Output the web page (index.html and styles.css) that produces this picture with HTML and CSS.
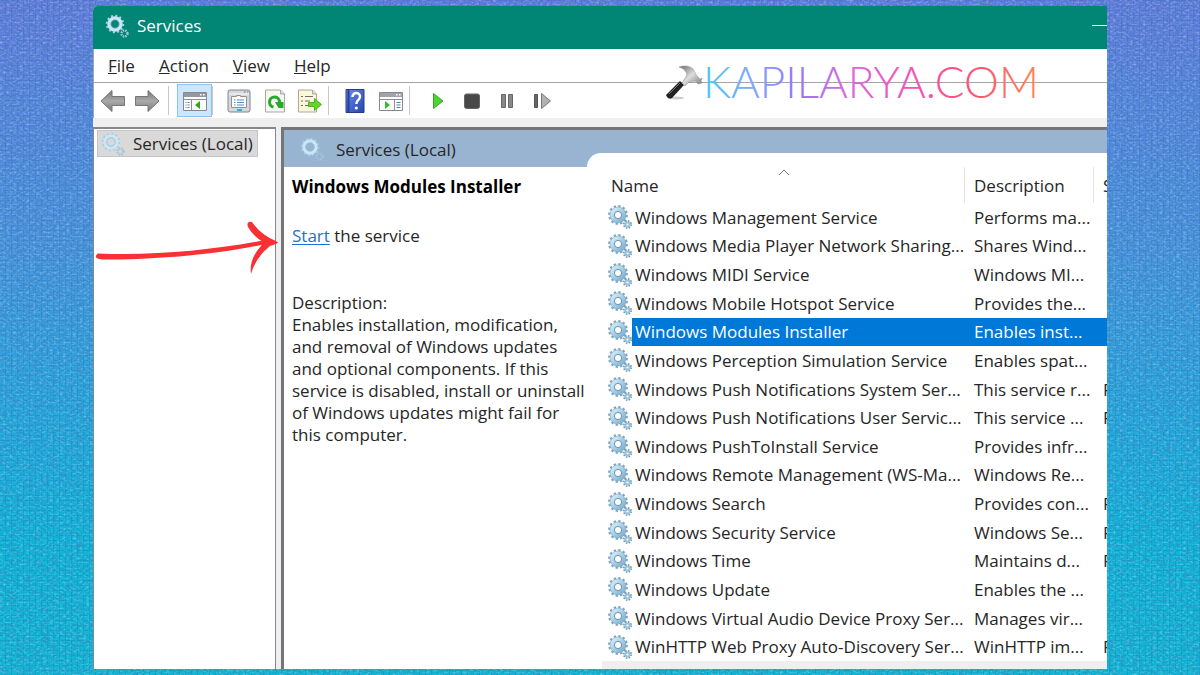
FILE: index.html
```html
<!DOCTYPE html>
<html lang="en">
<head>
<meta charset="utf-8">
<title>Services</title>
<link rel="stylesheet" href="styles.css">
</head>
<body>
<svg class="fabric" aria-hidden="true">
  <filter id="weave" x="0" y="0" width="100%" height="100%">
    <feTurbulence type="fractalNoise" baseFrequency="0.12 0.34" numOctaves="3" seed="8"/>
    <feColorMatrix values="0 0 0 0 0.05  0 0 0 0 0.2  0 0 0 0 0.5  1.8 0 0 0 -0.75"/>
  </filter>
  <filter id="glint" x="0" y="0" width="100%" height="100%">
    <feTurbulence type="fractalNoise" baseFrequency="0.3 0.5" numOctaves="2" seed="21"/>
    <feColorMatrix values="0 0 0 0 0.6  0 0 0 0 0.85  0 0 0 0 1  1.6 0 0 0 -0.75"/>
  </filter>
  <pattern id="threads" width="6" height="5" patternUnits="userSpaceOnUse"><path d="M0 .5h4M5.500 0v5" stroke="#123f8c" stroke-opacity=".3"/></pattern>
  <rect width="100%" height="100%" fill="url(#threads)"/>
  <rect width="100%" height="100%" filter="url(#weave)"/>
  <rect width="100%" height="100%" filter="url(#glint)"/>
</svg>
<svg class="defs" aria-hidden="true">
  <defs>
    <linearGradient id="steel" x1="0" y1="0" x2="1" y2="1"><stop offset="0" stop-color="#d3ecf8"/><stop offset="1" stop-color="#7fb0cf"/></linearGradient>
    <linearGradient id="gray" x1="0" y1="0" x2="0" y2="1"><stop offset="0" stop-color="#777"/><stop offset=".5" stop-color="#aaa"/><stop offset="1" stop-color="#777"/></linearGradient>
    <linearGradient id="blue" x1="0" y1="0" x2="1" y2="1"><stop offset="0" stop-color="#6d8bea"/><stop offset="1" stop-color="#2545ad"/></linearGradient>
    <linearGradient id="metal" x1="0" y1="0" x2="1" y2="1"><stop offset="0" stop-color="#666"/><stop offset=".5" stop-color="#ddd"/><stop offset="1" stop-color="#777"/></linearGradient>
    <symbol id="gears" viewBox="0 0 24 24">
      <circle cx="10" cy="10" r="8.6" fill="none" stroke="#7ba5c0" stroke-width="2.6" stroke-dasharray="2.3 2.2"/>
      <circle cx="10" cy="10" r="5.8" fill="none" stroke="url(#steel)" stroke-width="4.6"/>
      <circle cx="10" cy="10" r="3.6" fill="none" stroke="#6795b5" stroke-width="1"/>
      <circle cx="10" cy="10" r="8" fill="none" stroke="#7faac5" stroke-width=".6"/>
      <circle cx="19.5" cy="19.5" r="3.6" fill="none" stroke="#6f97b2" stroke-width="1.8" stroke-dasharray="1.5 1.33"/>
      <circle cx="19.5" cy="19.5" r="2.1" fill="none" stroke="#98c1da" stroke-width="2"/>
    </symbol>
    <symbol id="gears-light" viewBox="0 0 24 24">
      <circle cx="10" cy="10" r="8.3" fill="none" stroke="#a5cce0" stroke-width="2" stroke-dasharray="2 2.35"/>
      <circle cx="10" cy="10" r="6" fill="none" stroke="#c9e6f4" stroke-width="3.400"/>
      <circle cx="10" cy="10" r="4.2" fill="none" stroke="#8db9d3" stroke-width=".8"/>
      <circle cx="19.500" cy="19.500" r="3" fill="none" stroke="#a3c3d6" stroke-width="2.400" stroke-dasharray="1.500 .9"/>
    </symbol>
  </defs>
</svg>

<main class="window">
  <header class="titlebar">
    <svg class="gear"><use href="#gears-light"/></svg>
    <h1 class="title">Services</h1>
    <button class="minimize" aria-label="Minimize"></button>
  </header>

  <div class="chrome">
    <nav class="menubar">
      <button><u>F</u>ile</button>
      <button><u>A</u>ction</button>
      <button><u>V</u>iew</button>
      <button><u>H</u>elp</button>
    </nav>
    <div class="toolbar">
      <button class="tool arrow" aria-label="Back"><svg viewBox="0 0 26 24"><path d="M1 12 12 1.500V7.500H24.500V16.500H12V22.500Z" fill="url(#gray)" stroke="#777" stroke-linejoin="round"/></svg></button>
      <button class="tool arrow" aria-label="Forward"><svg viewBox="0 0 26 24"><path d="M25 12 14 1.500V7.500H1.500V16.500H14V22.500Z" fill="url(#gray)" stroke="#777" stroke-linejoin="round"/></svg></button>
      <span class="sep"></span>
      <button class="tool active" aria-label="Show or hide console tree"><svg viewBox="0 0 26 24"><path d="M1.500 3.500h23v18h-23z" fill="#fff" stroke="#85898f"/><path d="M2 4h22v4H2z" fill="#9499a1"/><path d="M18 5h1.500v1.500H18zM21 5h1.500v1.500H21z" fill="#fff"/><path d="M2 10.500h22M9.500 11v10" stroke="#8b8f96"/><path d="M3.500 13.500h4M3.500 16h4M3.500 18.500h4" stroke="#4f7fae" stroke-dasharray="1 1 2"/><path d="M13 16 18 12v8z" fill="#2fa51d"/></svg></button>
      <span class="sep"></span>
      <button class="tool" aria-label="Properties"><svg viewBox="0 0 26 24"><rect x="2" y="1" width="22" height="22" rx="2" fill="#d5d9de" stroke="#80858c"/><path d="M3 5h20" stroke="#f8f8f8"/><path d="M18 3h1.500M21 3h1.500" stroke="#70757c"/><path d="M5.500 7.500h5v-1h4v1h6v11h-15z" fill="#fff" stroke="#8b9099"/><path d="M8 11h1.500M11 11h7M8 13.500h1.500M11 13.500h7M8 16h1.500M11 16h7" stroke="#4e8fc5"/><path d="M11 21h5" stroke="#27b3dc" stroke-width="2"/></svg></button>
      <button class="tool" aria-label="Refresh"><svg viewBox="0 0 26 24"><path d="M3.500 1h15l4 4v18h-19z" fill="#f7f6f1" stroke="#aaa899"/><path d="M18.500 1v4h4" fill="#ddd" stroke="#aaa899"/><path d="M11.500 18a5 5 0 1 1 6-5" fill="none" stroke="#27aa2b" stroke-width="3"/><path d="M13 13h8.500v6h-5z" fill="#27aa2b"/></svg></button>
      <button class="tool narrow" aria-label="Export list"><svg viewBox="0 0 26 24"><path d="M2.500 1h14l4 4v18h-18z" fill="#fbf7dd" stroke="#b2a88f"/><path d="M16.500 1v4h4" fill="#ddd" stroke="#b2a88f"/><path d="M5 7.500h2M9 7.500h8M5 12h2M9 12h5M5 16.500h2M9 16.500h7" stroke="#776d65"/><path d="M12.500 13.500h6V9.500l7 6-7 6v-4h-6z" fill="#65d42c" stroke="#4bb423"/></svg></button>
      <span class="sep after-export"></span>
      <button class="tool" aria-label="Help"><svg viewBox="0 0 26 24"><path d="M4 .5h18v23H4z" fill="url(#blue)" stroke="#263d86"/><path d="M6.500 1v22" stroke="#233f99" stroke-width="2"/><path d="M10.500 8c0-5.500 8-5 7.500 0-.3 3-3.700 3-3.700 7" fill="none" stroke="#fff" stroke-width="2.500"/><circle cx="14.300" cy="19" r="1.600" fill="#fff"/></svg></button>
      <button class="tool" aria-label="Show or hide action pane"><svg viewBox="0 0 26 24"><path d="M1.500 3.500h23v18h-23z" fill="#fff" stroke="#85898f"/><path d="M2 4h22v4H2z" fill="#9fa3aa"/><path d="M18 5h1.500v1.500H18zM21 5h1.500v1.500H21z" fill="#fff"/><path d="M2 10.500h22M16.500 11v10" stroke="#8b8f96"/><path d="M18.500 13.500h4M18.500 16h4M18.500 18.500h4" stroke="#4f7fae"/><path d="M7 12v8l5-4z" fill="#39b927"/></svg></button>
      <span class="sep before-media"></span>
      <button class="tool narrow" aria-label="Start service"><svg viewBox="0 0 26 24"><path d="M8.500 4.500v15l9.500-7.500z" fill="#4fd32f" stroke="#2fa72c"/></svg></button>
      <button class="tool media" aria-label="Stop service"><svg viewBox="0 0 26 24"><rect x="5.500" y="5" width="15" height="14.500" rx="2" fill="#484848" stroke="#666"/></svg></button>
      <button class="tool media" aria-label="Pause service"><svg viewBox="0 0 26 24"><path d="M7.500 5.500h4v13h-4zM14.500 5.500h4v13h-4z" fill="#888" stroke="#666"/></svg></button>
      <button class="tool media" aria-label="Restart service"><svg viewBox="0 0 26 24"><path d="M5.500 5.500h3v13h-3z" fill="#666" stroke="#555"/><path d="M12.500 4.500v15l9-7.500z" fill="#b2b2b2" stroke="#777"/></svg></button>
    </div>
    <div class="brand">
      <svg class="hammer" viewBox="0 0 36 36" aria-hidden="true"><ellipse cx="10" cy="33" rx="8" ry="1.500" fill="#ccc"/><path d="M0 30 14 16l4 4L6 33Q2 35 0 30Z" fill="#222"/><path d="m3 29 11-11" stroke="#777"/><path d="M16 18l5-8q-1-6-8-8 9-3 14 2l4 7 3 3 2-1-1 3 1 2-4 1-3-3-6 1-4 4z" fill="url(#metal)" stroke="#888" stroke-width=".5"/></svg>
      <svg class="wordmark" viewBox="0 0 340 36" role="img" aria-label="KAPILARYA.COM">
        <defs><linearGradient id="rainbow" gradientUnits="userSpaceOnUse" x1="0" y1="0" x2="340" y2="0"><stop offset="0" stop-color="#45c9ed"/><stop offset=".15" stop-color="#83a5ff"/><stop offset=".27" stop-color="#9278f7"/><stop offset=".42" stop-color="#d36be0"/><stop offset=".62" stop-color="#f551b4"/><stop offset=".8" stop-color="#ff5273"/><stop offset="1" stop-color="#ff8a50"/></linearGradient></defs>
        <text x="0" y="33" fill="url(#rainbow)">KAPILARYA.COM</text>
      </svg>
    </div>
  </div>

  <div class="workspace">
    <aside class="tree">
      <button class="node"><svg class="gear"><use href="#gears-light"/></svg>Services (Local)</button>
    </aside>
    <section class="content">
      <div class="banner"><svg class="gear"><use href="#gears-light"/></svg><h2>Services (Local)</h2></div>
      <div class="panes">
        <div class="detail">
          <h3>Windows Modules Installer</h3>
          <p class="action"><a href="#start">Start</a> the service</p>
          <p>Description:</p>
          <p class="about">Enables installation, modification, and removal of Windows updates and optional components. If this service is disabled, install or uninstall of Windows updates might fail for this computer.</p>
        </div>
        <div class="list">
          <table>
            <thead><tr><th class="name">Name<svg class="sort" viewBox="0 0 12 8"><path d="m1 7 5-5 5 5" fill="none" stroke="#777"/></svg></th><th class="desc">Description</th><th class="status">Status</th></tr></thead>
            <tbody>
              <tr><td><span><svg class="gear"><use href="#gears"/></svg>Windows Management Service</span></td><td>Performs ma...</td><td></td></tr>
              <tr><td><span><svg class="gear"><use href="#gears"/></svg>Windows Media Player Network Sharing...</span></td><td>Shares Wind...</td><td></td></tr>
              <tr><td><span><svg class="gear"><use href="#gears"/></svg>Windows MIDI Service</span></td><td>Windows MI...</td><td></td></tr>
              <tr><td><span><svg class="gear"><use href="#gears"/></svg>Windows Mobile Hotspot Service</span></td><td>Provides the...</td><td></td></tr>
              <tr class="selected"><td><span><svg class="gear"><use href="#gears"/></svg>Windows Modules Installer</span></td><td>Enables inst...</td><td></td></tr>
              <tr><td><span><svg class="gear"><use href="#gears"/></svg>Windows Perception Simulation Service</span></td><td>Enables spat...</td><td></td></tr>
              <tr><td><span><svg class="gear"><use href="#gears"/></svg>Windows Push Notifications System Ser...</span></td><td>This service r...</td><td>Running</td></tr>
              <tr><td><span><svg class="gear"><use href="#gears"/></svg>Windows Push Notifications User Servic...</span></td><td>This service ...</td><td>Running</td></tr>
              <tr><td><span><svg class="gear"><use href="#gears"/></svg>Windows PushToInstall Service</span></td><td>Provides infr...</td><td></td></tr>
              <tr><td><span><svg class="gear"><use href="#gears"/></svg>Windows Remote Management (WS-Ma...</span></td><td>Windows Re...</td><td></td></tr>
              <tr><td><span><svg class="gear"><use href="#gears"/></svg>Windows Search</span></td><td>Provides con...</td><td>Running</td></tr>
              <tr><td><span><svg class="gear"><use href="#gears"/></svg>Windows Security Service</span></td><td>Windows Se...</td><td>Running</td></tr>
              <tr><td><span><svg class="gear"><use href="#gears"/></svg>Windows Time</span></td><td>Maintains d...</td><td>Running</td></tr>
              <tr><td><span><svg class="gear"><use href="#gears"/></svg>Windows Update</span></td><td>Enables the ...</td><td></td></tr>
              <tr><td><span><svg class="gear"><use href="#gears"/></svg>Windows Virtual Audio Device Proxy Ser...</span></td><td>Manages vir...</td><td></td></tr>
              <tr><td><span><svg class="gear"><use href="#gears"/></svg>WinHTTP Web Proxy Auto-Discovery Ser...</span></td><td>WinHTTP im...</td><td>Running</td></tr>
            </tbody>
          </table>
          <div class="scrollbar"></div>
        </div>
      </div>
    </section>
  </div>
  <svg class="pointer" viewBox="0 0 184 56" aria-hidden="true"><path d="M4 33.500C60 36 120 30 172 20l4 3C130 34 60 40 8 39.500Q-2 38 4 33.500Z" fill="#fb3034"/><path d="M158 2q9 13 24 19l2 1.500-2 1.500-6 2Q162 37 157 54q-2-15 10-28l2-4q-10-6-15-15-2-6 4-5z" fill="#fb3034"/></svg>
</main>
</body>
</html>
```

FILE: styles.css
```css
* { box-sizing: border-box; }
body {
  margin: 0;
  min-height: 100vh;
  padding: 6px 93px;
  display: flex;
  overflow: hidden;
  background: linear-gradient(#627bda 0, #5785dc 15%, #4594dc 38%, #22a7da 62%, #0cb4d6 80%, #0eb5d3 100%);
  color: #262626;
  font: 17px/23px "Open Sans", "Noto Sans", sans-serif;
}
button {
  border: 0;
  padding: 0;
  background: none;
  color: inherit;
  font: inherit;
}
h1, h2, h3, p { margin: 0; font: inherit; }
.defs { position: absolute; width: 0; height: 0; }
.fabric { position: absolute; inset: 0; width: 100%; height: 100%; opacity: 0.6; }
.gear { flex: none; width: 24px; height: 24px; }

.window {
  position: relative;
  flex: 1;
  min-width: 0;
  display: flex;
  flex-direction: column;
  background: #fff;
  border-radius: 5px 0 0 0;
}
.titlebar {
  display: flex;
  align-items: center;
  gap: 8px;
  height: 43px;
  padding: 0 0 4px 12px;
  background: #018574;
  color: #fff;
  border-radius: 5px 0 0 0;
}
.minimize { width: 15px; height: 1px; margin-left: auto; background: #fff; }

.chrome { position: relative; border-left: 1px solid #9aa; }
.menubar {
  display: flex;
  gap: 24px;
  height: 34px;
  padding: 0 14px;
  border-bottom: 1px solid #a5a5a5;
}
.toolbar { display: flex; align-items: center; height: 35px; padding: 0 6px; }
.tool {
  display: flex;
  align-items: center;
  justify-content: center;
  width: 36px;
  height: 33px;
}
.tool svg { width: 26px; height: 24px; }
.arrow { width: 34px; justify-content: flex-start; }
.active { width: 35px; border: 1px solid #8ac4f4; background: #cde6fb; }
.media { width: 35px; }
.narrow { width: 32px; }
.sep { width: 1px; height: 29px; margin-right: 8px; background: #c9c9c9; }
.after-export { margin-left: 3px; }
.before-media { margin-right: 12px; }
.brand {
  position: absolute;
  top: 16px;
  right: 64px;
  display: flex;
  align-items: center;
}
.hammer { width: 38px; height: 36px; }
.wordmark { width: 340px; height: 36px; overflow: visible; }
.wordmark text { font: 300 44px Lato, sans-serif; }

.workspace {
  flex: 1;
  display: flex;
  gap: 5px;
  padding-top: 9px;
  background: #efeff0;
}
.tree {
  flex: none;
  width: 183px;
  padding: 1px 3px;
  background: #fff;
  border: solid #85888b;
  border-width: 2px 1px 0;
}
.node {
  display: flex;
  align-items: center;
  gap: 8px;
  height: 27px;
  padding: 0 4px 0 3px;
  border: 1px solid #c5c5c5;
  background: #d9d9d9;
  white-space: nowrap;
}
.content {
  flex: 1;
  min-width: 0;
  display: flex;
  flex-direction: column;
  background: #fff;
  border: solid #737578;
  border-width: 3px 0 0 3px;
}
.banner {
  display: flex;
  align-items: center;
  gap: 12px;
  height: 37px;
  padding: 1px 16px 0;
  background: #99b4d1;
}
.panes { flex: 1; display: flex; }
.detail { flex: none; width: 303px; padding: 8px 0 0 8px; }
.detail h3 { font-weight: 700; color: #000; }
.action { margin: 26px 0 44px; }
.action a { color: #1a72d0; text-underline-offset: 2px; }
.about { line-height: 22px; }
.list {
  flex: 1;
  min-width: 0;
  display: flex;
  flex-direction: column;
  margin-top: -14px;
  padding-left: 15px;
  background: #fff;
  border-radius: 14px 0 0 0;
  overflow: hidden;
}
table {
  flex: 1;
  width: 100%;
  table-layout: fixed;
  border-collapse: collapse;
  white-space: nowrap;
}
th, td { padding: 0; text-align: left; font-weight: 400; overflow: hidden; }
th { height: 50px; padding: 15px 0 0 9px; }
th.name, th.desc { background: linear-gradient(#e5e5e5, #e5e5e5) right 14px / 1px 36px no-repeat; }
th.name { position: relative; width: 363px; }
th.desc { width: 129px; }
.sort { position: absolute; top: 15px; left: 176px; width: 12px; height: 8px; }
td { padding-left: 9px; }
td:first-child { padding-left: 6px; }
td span { display: flex; gap: 3px; height: 28px; align-items: center; }
.selected { color: #fff; }
.selected td { background: #0078d7; }
.selected td:first-child { background: linear-gradient(#0078d7, #0078d7) 30px 0 no-repeat; }
.scrollbar { flex: none; height: 8px; background: #efefef; }
.pointer { position: absolute; top: 214px; left: 1px; width: 184px; height: 56px; }
```
